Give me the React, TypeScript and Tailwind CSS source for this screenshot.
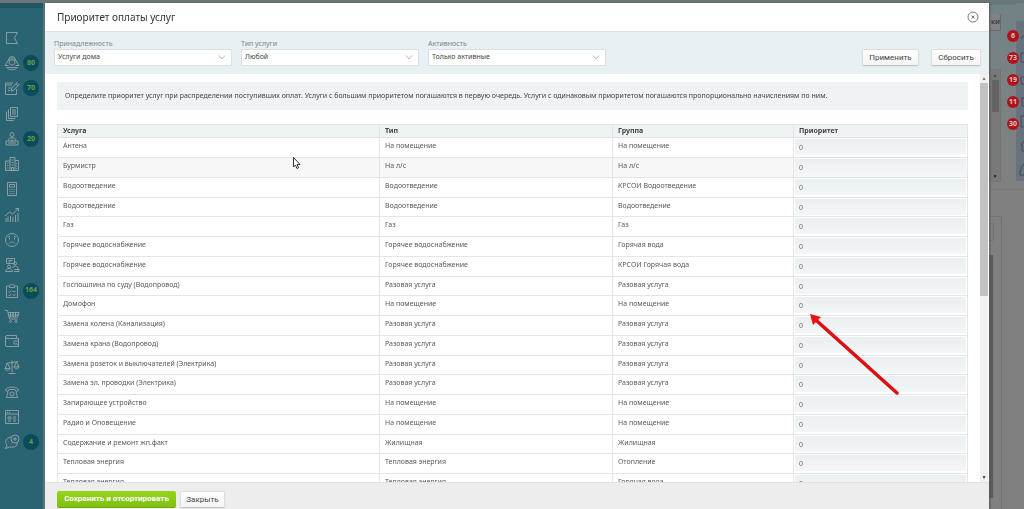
import React from 'react';

interface ServiceRow {
  name: string;
  type: string;
  group: string;
}

const services: ServiceRow[] = [
  { name: 'Антена', type: 'На помещение', group: 'На помещение' },
  { name: 'Бурмистр', type: 'На л/с', group: 'На л/с' },
  { name: 'Водоотведение', type: 'Водоотведение', group: 'КРСОИ Водоотведение' },
  { name: 'Водоотведение', type: 'Водоотведение', group: 'Водоотведение' },
  { name: 'Газ', type: 'Газ', group: 'Газ' },
  { name: 'Горячее водоснабжение', type: 'Горячее водоснабжение', group: 'Горячая вода' },
  { name: 'Горячее водоснабжение', type: 'Горячее водоснабжение', group: 'КРСОИ Горячая вода' },
  { name: 'Госпошлина по суду (Водопровод)', type: 'Разовая услуга', group: 'Разовая услуга' },
  { name: 'Домофон', type: 'На помещение', group: 'На помещение' },
  { name: 'Замена колена (Канализация)', type: 'Разовая услуга', group: 'Разовая услуга' },
  { name: 'Замена крана (Водопровод)', type: 'Разовая услуга', group: 'Разовая услуга' },
  { name: 'Замена розеток и выключателей (Электрика)', type: 'Разовая услуга', group: 'Разовая услуга' },
  { name: 'Замена эл. проводки (Электрика)', type: 'Разовая услуга', group: 'Разовая услуга' },
  { name: 'Запирающее устройство', type: 'На помещение', group: 'На помещение' },
  { name: 'Радио и Оповещение', type: 'На помещение', group: 'На помещение' },
  { name: 'Содержание и ремонт жп.факт', type: 'Жилищная', group: 'Жилищная' },
  { name: 'Тепловая энергия', type: 'Тепловая энергия', group: 'Отопление' },
  { name: 'Тепловая энергия', type: 'Тепловая энергия', group: 'Горячая вода' },
];

interface MenuItem {
  id: string;
  count?: number;
  icon: React.ReactNode;
}

const menu: MenuItem[] = [
  { id: 'flag', icon: <path d="M2.5 2.5h11l-3 5.500 3 5.500h-11z" /> },
  {
    id: 'residents',
    count: 80,
    icon: <path d="M4.5 5C5 .5 11 .5 11.500 5M4 5h8M4.500 5L1 10.500h3.500M11.500 5L15 10.500h-3.500M5.500 5.500L5 8.500c1.500 2 4.500 2 6 0l-.5-3M2.500 12.500h11M3 12.500c1 3 9 3 10 0M8 2v2.500M6 2.500v2M10 2.500v2" />,
  },
  {
    id: 'edit',
    count: 70,
    icon: <path d="M9 3H1.5v11.500h11V9M1.500 5H8M4 8h3M4 10.500h2M7 11l1-3L13 2.500l2 2L10 10zM12 4l2 2" />,
  },
  {
    id: 'documents',
    icon: <path d="M6.5 1.500h7v9h-7zM4.500 3.500v9h7M2.500 5.500v9h7M8 4h4M8 6h4M8 8h4" />,
  },
  {
    id: 'reception',
    count: 20,
    icon: <path d="M8 1.5a2 2 0 1 1 0 4 2 2 0 0 1 0-4zM4.500 10V8.500C5 6 11 6 11.500 8.500V10M2 10h12v4H2zM6.500 10h3M8 7.500V9M4 12h8" />,
  },
  {
    id: 'houses',
    icon: <path d="M1.5 14.500V5H6M6 14.500v-13h5v13M11 4.500h3.500v10H1M3 7h1.500M3 9.500h1.500M3 12h1.500M7.500 4h2M7.500 6.500h2M7.500 9h2M7.500 14v-2.500h2V14M12.500 7v1M12.500 9.500v1M12.500 12v1" />,
  },
  {
    id: 'calculator',
    icon: <path d="M3.5 1.500h9v13h-9zM5.500 3.500h5V6h-5zM5.500 8.500h1M7.500 8.500h1M9.500 8.500h1M5.500 10.500h1M7.500 10.500h1M9.500 10.500h1M5.500 12.500h1M7.500 12.500h1M9.500 12.500h1" />,
  },
  {
    id: 'growth',
    icon: <path d="M1 9l4.5-4 3 2 6-5.500M11.500 1.500h3v3M2 11v4M4 9.500V15M6.500 9v6M9 10v5M11.500 8v7M14 6v9" />,
  },
  {
    id: 'complaints',
    icon: <path d="M8 1.5a6.500 6.500 0 1 1 0 13 6.500 6.500 0 0 1 0-13zM5.500 6v1.500M10.500 6v1.500M5 11.500c1.500-2 4.500-2 6 0M4 5l2-.5M12 5l-2-.5" />,
  },
  {
    id: 'meeting',
    icon: <path d="M2.5 1.500h8v5h-8zM4.500 3.500h4M4.500 5h2M11 5a1.500 1.500 0 1 1 0 3 1.500 1.500 0 0 1 0-3zM5 8a1.500 1.500 0 1 1 0 3 1.500 1.500 0 0 1 0-3zM1.500 14.500c0-4 7-4 7 0zM8.500 11c1-3 5.500-2.500 5.500 1M10 14.500h5v-2h-5" />,
  },
  {
    id: 'tasks',
    count: 164,
    icon: <path d="M5.5 3h-3v11.500h11V3h-3M5.500 4.500h5V3c-.5-2-4.500-2-5 0zM4.500 8.500l1 1 1.500-2M8.500 8.500h3M4.500 12l1 1 1.500-2M8.500 12h3" />,
  },
  {
    id: 'cart',
    icon: <path d="M1 2.500h2.500l2 8.500h8M4 4.500h11L13.500 9H5M6.500 5v4M9 5v4M11.500 5v4M4.500 7h10M6.500 12.500a1 1 0 1 1 0 2 1 1 0 0 1 0-2zM12 12.500a1 1 0 1 1 0 2 1 1 0 0 1 0-2z" />,
  },
  {
    id: 'wallet',
    icon: <path d="M12.5 5V2.500H3a1.500 1.500 0 0 0 0 3h11.500v8H3A1.500 1.500 0 0 1 1.500 12V4M14.500 8H11a1.500 1.500 0 0 0 0 3h3.500" />,
  },
  {
    id: 'law',
    icon: <path d="M8 1.5v12M4.500 14.500h7M2 4.500l12-2M3.500 4.500L1 9.500h5zM12.500 3L10 8h5zM1 9.500c.5 2.500 4.500 2.500 5 0M10 8c.5 2.500 4.500 2.500 5 0" />,
  },
  {
    id: 'phone',
    icon: <path d="M1.5 6.500c0-4.500 13-4.500 13 0l-2.500 1-1-2H5l-1 2zM4 8l-1.500 5.500h11L12 8M8 8a2 2 0 1 1 0 4 2 2 0 0 1 0-4z" />,
  },
  {
    id: 'news',
    icon: <path d="M1.5 1.500h13v13h-13zM1.500 5h13M3 3.500h1M5 3.500h1M4 8h3v2H4zM9 8h3M9 10h3M4 12h3M9 12h3" />,
  },
  {
    id: 'chat',
    count: 4,
    icon: <path d="M7 3C2 3.500 0 8 3 11l-1.500 3.500 4-1.500c5 1 8-1 7.500-4M11 1a4 4 0 1 1 0 8 4 4 0 0 1 0-8zM11 3v4M9 5h4M4 8h.5M7 10h.5" />,
  },
];

const filters = [
  { id: 'ownership', label: 'Принадлежность', value: 'Услуги дома' },
  { id: 'service-type', label: 'Тип услуги', value: 'Любой' },
  { id: 'activity', label: 'Активность', value: 'Только активные' },
];

const alerts = [6, 73, 19, 11, 30];

const Sidebar: React.FC = () => (
  <nav className="w-[45px] shrink-0 border-r-2 border-[#5c747b] bg-[#2a6473]">
    <div className="h-2 bg-[#235665]">
      <div className="h-px w-[19px] bg-[#7c9a2c]" />
    </div>
    <ul className="mt-[17px] flex h-[430px] flex-col">
      {menu.map((item) => (
        <li key={item.id} className="flex flex-1 items-center gap-[3px] pl-1">
          <a href={`#${item.id}`} aria-label={item.id}>
            <svg viewBox="0 0 16 16" className="size-4 fill-none stroke-[#8b9da2] stroke-1">
              {item.icon}
            </svg>
          </a>
          {item.count !== undefined && (
            <span className="flex size-4 items-center justify-center rounded-full bg-[#0a4b5c] text-[7px] font-bold text-[#6fa03c]">
              {item.count}
            </span>
          )}
        </li>
      ))}
    </ul>
  </nav>
);

const Backdrop: React.FC = () => (
  <div className="flex min-w-0 flex-1 flex-col bg-[#808080]">
    <div className="flex h-[190px] justify-end border-b border-[#777777] bg-linear-to-b from-[#728287] via-[#7a8284] to-[#808080]">
      <div className="flex w-3 flex-col">
        <div className="h-[5px] bg-[#607c83]" />
        <button type="button" className="mt-[9px] h-[17px] rounded-r-xs border-r border-b border-[#686868] bg-[#838383] text-right font-['Roboto',sans-serif] text-[8px] text-[#2c2c2c]">
          ки
        </button>
        <div className="mt-[38px] flex h-[113px] flex-col items-center border border-[#747474] bg-[#797979] pt-px">
          <span className="text-[5px] leading-[9px] text-[#4a4a4a]">▲</span>
          <span className="h-8 w-[7px] bg-[#636363]" />
          <span className="mt-auto text-[5px] leading-[9px] text-[#222222]">▼</span>
        </div>
      </div>
      <div className="z-10 flex w-[15px] flex-col">
        <div className="h-[5px] bg-[#607c83]" />
        <ul className="-mr-[3px] mt-[25px] flex flex-col items-end gap-[10px]">
          {alerts.map((count) => (
            <li key={count} className="flex size-3 items-center justify-center rounded-full bg-[#b01318] text-[7px] leading-3 font-bold text-[#dcc4c4]">
              {count}
            </li>
          ))}
        </ul>
      </div>
      <div className="mt-[21px] h-[160px] w-2 overflow-hidden rounded-l-xs bg-[#69727f]">
        <svg viewBox="0 0 8 160" className="h-full w-full fill-none stroke-[#414b5c] stroke-1">
          <path d="M5 18l2-3h1M8 32H5v9h3M8 56H5v7h3M5 77h3M6 77v8h2M8 95H5v11h3M8 120l-3 4h1v6h2M8 143l-3 4v3h-1v4h4" />
        </svg>
      </div>
    </div>
    <div className="mt-[26px] flex min-h-0 flex-1 justify-end pr-[22px]">
      <div className="w-6 border-t border-r border-[#747474] pt-[6px] pr-[7px]">
        <div className="h-[18px] rounded-xs border border-[#747474]" />
        <div className="mt-[14px] mr-px h-[243px] bg-[#5c5c5c]" />
      </div>
    </div>
  </div>
);

const SelectField: React.FC<{ id: string; label: string; value: string }> = ({ id, label, value }) => (
  <div className="w-[178px]">
    <label htmlFor={id} className="block pt-px text-[7px] leading-[10px] text-[#7b868b]">
      {label}
    </label>
    <div className="relative">
      <select
        id={id}
        defaultValue={value}
        className="block h-[17px] w-full appearance-none border border-[#dadfe1] bg-white pl-[3px] text-[7px] text-[#444444]"
      >
        <option>{value}</option>
      </select>
      <svg viewBox="0 0 8 5" className="pointer-events-none absolute top-[6px] right-[6px] h-[5px] w-2 fill-none stroke-[#b4babd] stroke-1">
        <path d="M1 .5L4 4 7 .5" />
      </svg>
    </div>
  </div>
);

const PriorityTable: React.FC = () => (
  <table className="mt-[14px] w-full table-fixed border-collapse text-left text-[7px] leading-[8px] text-[#56595c]">
    <colgroup>
      <col />
      <col className="w-[233px]" />
      <col className="w-[181px]" />
      <col className="w-[174px]" />
    </colgroup>
    <thead>
      <tr className="h-[13px] bg-[#f0f3f4] text-[#3f4346]">
        {['Услуга', 'Тип', 'Группа', 'Приоритет'].map((title) => (
          <th key={title} className="border border-[#e0e4e6] px-[5px] py-0 font-bold">
            {title}
          </th>
        ))}
      </tr>
    </thead>
    <tbody>
      {services.map((service, index) => (
        <tr key={index} className="h-5 align-top hover:bg-[#f7f7f7] nth-2:bg-[#f7f7f7] nth-[4n]:h-[19px]">
          <td className="border border-[#e3e6e8] px-[5px] pt-1">{service.name}</td>
          <td className="border border-[#e3e6e8] px-[5px] pt-1">{service.type}</td>
          <td className="border border-[#e3e6e8] px-[5px] pt-1">{service.group}</td>
          <td className="border border-[#e3e6e8] p-px">
            <input
              type="text"
              defaultValue="0"
              aria-label={`Приоритет: ${service.name}`}
              className="block h-4 w-full bg-linear-to-b from-[#eaeff2] to-[#f4f6f7] pt-px pl-1 text-[7px] text-[#6a6e71]"
            />
          </td>
        </tr>
      ))}
    </tbody>
  </table>
);

const greyButton =
  "rounded-xs border border-[#dcdcdc] border-b-[#c4c4c4] bg-linear-to-b from-white to-[#f4f4f4] font-['Roboto',sans-serif] text-[8px] text-[#444444] shadow-xs";

const PriorityModal: React.FC = () => (
  <div className="fixed inset-0 z-20 flex border-t-[3px] border-[#6c7679] pr-[35px] pl-[45px]">
    <div role="dialog" aria-labelledby="modal-title" className="relative flex min-w-0 flex-1 flex-col bg-white shadow-[1px_0_2px_#555555]">
      <header className="flex h-[29px] shrink-0 items-center justify-between border-b border-[#dde1e3] pr-[10px] pl-3">
        <h1 id="modal-title" className="text-[10px] text-[#333333]">Приоритет оплаты услуг</h1>
        <button type="button" aria-label="Закрыть окно">
          <svg viewBox="0 0 12 12" className="size-3 fill-none stroke-[#777777] stroke-1">
            <circle cx="6" cy="6" r="5" />
            <path d="M4.500 4.500l3 3M7.500 4.500l-3 3" />
          </svg>
        </button>
      </header>

      <form className="flex h-[42px] shrink-0 items-start gap-[9px] bg-[#e9f0f3] pt-[6px] pr-2 pl-[9px]">
        {filters.map((filter) => (
          <SelectField key={filter.id} {...filter} />
        ))}
        <div className="mt-[11px] ml-auto flex gap-3">
          <button type="button" className={`${greyButton} h-[17px] w-[57px]`}>Применить</button>
          <button type="reset" className={`${greyButton} h-[17px] w-[50px]`}>Сбросить</button>
        </div>
      </form>

      <div className="flex min-h-0 flex-1">
        <div className="min-w-0 flex-1 overflow-hidden pt-2 pr-3 pl-3">
          <p className="bg-[#eff3f4] px-2 py-[9px] text-[7px] leading-[10px] text-[#444444]">
            Определите приоритет услуг при распределении поступивших оплат. Услуги с большим приоритетом погашаются в
            первую очередь. Услуги с одинаковым приоритетом погашаются пропорционально начислениям по ним.
          </p>
          <PriorityTable />
        </div>
        <div className="mr-px flex w-2 flex-col items-center bg-[#f1f1f1]" aria-hidden="true">
          <span className="text-[5px] leading-[9px] text-[#777777]">▲</span>
          <span className="h-[213px] w-full bg-[#c1c1c1]" />
          <span className="mt-auto text-[5px] leading-[10px] text-[#333333]">▼</span>
        </div>
      </div>

      <footer className="flex h-[27px] shrink-0 items-start gap-1 border-t border-[#e2e2e2] bg-[#ededed] pt-2 pl-3">
        <button
          type="submit"
          className="h-[17px] w-[119px] rounded-xs border-b border-[#74a80d] bg-linear-to-b from-[#96d41c] to-[#80c010] font-['Roboto',sans-serif] text-[8px] font-bold text-white"
        >
          Сохранить и отсортировать
        </button>
        <button type="button" className={`${greyButton} h-[17px] w-[45px]`}>Закрыть</button>
      </footer>

      <svg viewBox="0 0 92 84" className="pointer-events-none absolute top-[309px] right-[88px] h-[84px] w-[92px]">
        <path d="M88 81L8 9" className="fill-none stroke-[#dc1010] stroke-[3.5]" strokeLinecap="round" />
        <path d="M1 2l11 3-8 8z" className="fill-[#f01010]" />
      </svg>
      <svg viewBox="0 0 8 12" className="pointer-events-none absolute top-[154px] left-[248px] h-3 w-2 fill-white stroke-[#333333] stroke-1">
        <path d="M.5.5V10l2-2L4 11.500l1.500-.7-1.300-3.300H7z" />
      </svg>
    </div>
  </div>
);

const App: React.FC = () => (
  <div className="flex h-screen overflow-hidden font-['Noto_Sans','Open_Sans',sans-serif]">
    <Sidebar />
    <Backdrop />
    <PriorityModal />
  </div>
);

export default App;
